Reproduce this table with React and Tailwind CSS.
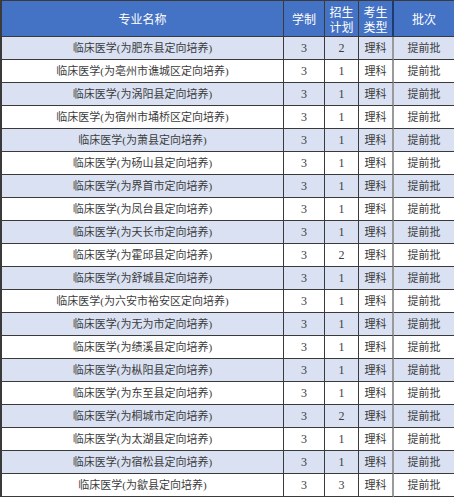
const rows = [
  ['肥东县', 2],
  ['亳州市谯城区', 1],
  ['涡阳县', 1],
  ['宿州市埇桥区', 1],
  ['萧县', 1],
  ['砀山县', 1],
  ['界首市', 1],
  ['凤台县', 1],
  ['天长市', 1],
  ['霍邱县', 2],
  ['舒城县', 1],
  ['六安市裕安区', 1],
  ['无为市', 1],
  ['绩溪县', 1],
  ['枞阳县', 1],
  ['东至县', 1],
  ['桐城市', 2],
  ['太湖县', 1],
  ['宿松县', 1],
  ['歙县', 3],
];

const cols = 'grid grid-cols-[282px_41px_34px_35px_61px]';

export default function App() {
  return (
    <div className="w-[454px] h-[499px] bg-white overflow-hidden" style={{ fontFamily: '"Liberation Serif", "Noto Sans CJK SC", serif' }}>
      <div className="border-l-2 border-t border-[#3a3a3a]">
        <div className={`${cols} h-[36px] bg-[#4472c4] text-white text-[12px] leading-[15px]`} style={{ fontFamily: '"Noto Sans CJK SC", sans-serif' }}>
          <div className="flex items-center justify-center border-r border-b border-[#3a3a3a]">专业名称</div>
          <div className="flex items-center justify-center border-r border-b border-[#3a3a3a]">学制</div>
          <div className="flex items-center justify-center border-r border-b border-[#3a3a3a] text-center">招生<br />计划</div>
          <div className="flex items-center justify-center border-r-2 border-b border-r-[#1f3a70] border-b-[#3a3a3a] text-center">考生<br />类型</div>
          <div className="flex items-center justify-center border-r border-b border-[#3a3a3a]">批次</div>
        </div>
        {rows.map(([place, plan], i) => (
          <div key={i} className={`${cols} h-[23px] text-[11px] text-[#3c3c3c] ${i % 2 === 0 ? 'bg-[#d9e1f2]' : 'bg-white'}`}>
            <div className="flex items-center justify-center border-r border-b border-[#3a3a3a]">临床医学(为{place}定向培养)</div>
            <div className="flex items-center justify-center border-r border-b border-[#3a3a3a] text-[12px]">3</div>
            <div className="flex items-center justify-center border-r border-b border-[#3a3a3a] text-[12px]">{plan}</div>
            <div className="flex items-center justify-center border-r-2 border-b border-r-[#9a9a9a] border-b-[#3a3a3a]">理科</div>
            <div className="flex items-center justify-center border-r border-b border-[#3a3a3a]">提前批</div>
          </div>
        ))}
      </div>
    </div>
  );
}
